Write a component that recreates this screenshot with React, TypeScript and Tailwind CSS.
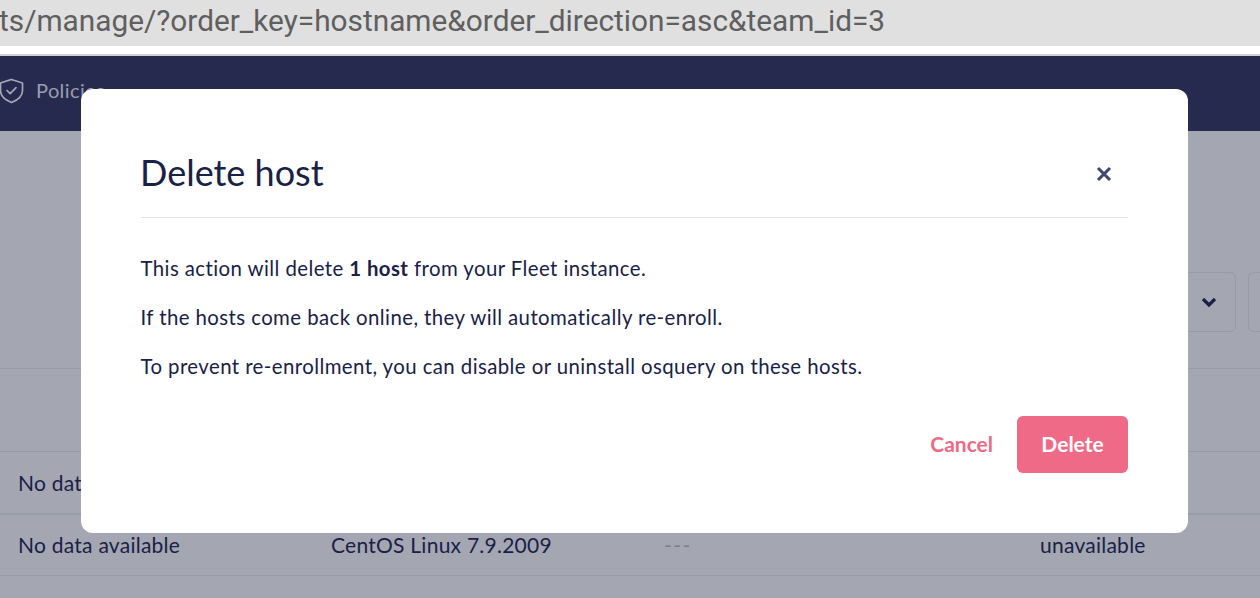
export default function App() {
  return (
    <div className="relative h-[598px] w-[1260px] overflow-hidden bg-white font-['Lato',sans-serif] text-[#192147]">
      {/* Address bar */}
      <div className="h-[46px] bg-[#e0e0e0] text-[29.8px] leading-[41px] text-[#5f5f5f] font-['Roboto',sans-serif] whitespace-nowrap">
        <span className="-ml-[1px] inline-block">ts/manage/?order_key=hostname&amp;order_direction=asc&amp;team_id=3</span>
      </div>
      <div className="h-[8px] bg-white" />
      <div className="h-[2px] bg-[#cfd0cf]" />
      {/* Nav */}
      <div className="flex h-[75px] items-start bg-[#272a4f] pt-[22px] text-[#9b9eae]">
        <svg width="25" height="26" viewBox="0 0 24 26" fill="none" stroke="#a5a7b5" strokeWidth="1.7" className="-ml-[1px] mr-[13px]">
          <path d="M12 1.5 23 5v7.500c0 5.500-4.500 9.500-11 12-6.500-2.500-11-6.500-11-12V5z" />
          <path d="m7.500 12.500 3.200 3.200 5.800-6" strokeLinecap="round" strokeLinejoin="round" />
        </svg>
        <span className="-ml-[1px] -mt-[1px] text-[20px] leading-[26px] tracking-[0.4px]">Policies</span>
      </div>
      {/* Page behind */}
      <div className="h-[467px] bg-[#a4a6b2] text-[21px] tracking-[0.25px] text-[#192147]">
        <div className="relative h-[238px] border-b border-[#979aa8]">
          <div className="absolute left-[1120px] top-[141px] flex h-[60px] w-[116px] items-center justify-end rounded-[6px] border border-[#979aa8] pr-[18px]">
            <svg width="16" height="10" viewBox="0 0 16 10" fill="none" stroke="#192147" strokeWidth="3.2"><path d="m2 2 6 6 6-6" /></svg>
          </div>
          <div className="absolute left-[1248px] top-[141px] h-[60px] w-[40px] rounded-[6px] border border-[#979aa8]" />
        </div>
        <div className="h-[83px] border-b border-[#979aa8]" />
        <div className="flex h-[63px] items-start border-b-2 border-[#979aa8] pl-[18px] pt-[17px] leading-[28px]">No data available</div>
        <div className="flex h-[61px] items-start border-b border-[#979aa8] pt-[16px] leading-[28px]">
          <span className="ml-[18px] w-[314px]">No data available</span>
          <span className="w-[332px] -ml-[1px] pr-0">CentOS Linux 7.9.2009</span>
          <span className="ml-[1px] w-[376px] tracking-[1.5px] text-[#7c7f92]">---</span>
          <span>unavailable</span>
        </div>
      </div>
      {/* Modal */}
      <div className="absolute left-[81px] top-[89px] h-[444px] w-[1107px] rounded-[12px] bg-white px-[60px]">
        <div className="relative h-[129px] border-b border-[#e2e4ea]">
          <h1 className="-ml-[1px] pt-[59px] text-[36px] font-normal leading-[48px]">Delete host</h1>
          <svg width="16" height="16" viewBox="0 0 16 16" fill="none" stroke="#3f4771" strokeWidth="3.1" className="absolute left-[955px] top-[77px]">
            <path d="m2 2 12 12m0-12L2 14" />
          </svg>
        </div>
        <div className="-ml-[0.5px] pt-[36px] text-[20.4px] leading-[28px] tracking-[0.42px]">
          <p>This action will delete <b>1 host</b> from your Fleet instance.</p>
          <p className="mt-[21px]">If the hosts come back online, they will automatically re-enroll.</p>
          <p className="mt-[21px]">To prevent re-enrollment, you can disable or uninstall osquery on these hosts.</p>
        </div>
        <div className="mt-[36px] flex items-center justify-end">
          <span className="mr-[24px] -mt-[2px] text-[21px] font-bold text-[#ee6a86]">Cancel</span>
          <div className="flex h-[57px] w-[111px] items-center justify-center rounded-[6px] bg-[#ee6a86] pb-[2px] text-[21px] font-bold text-white">Delete</div>
        </div>
      </div>
    </div>
  );
}
